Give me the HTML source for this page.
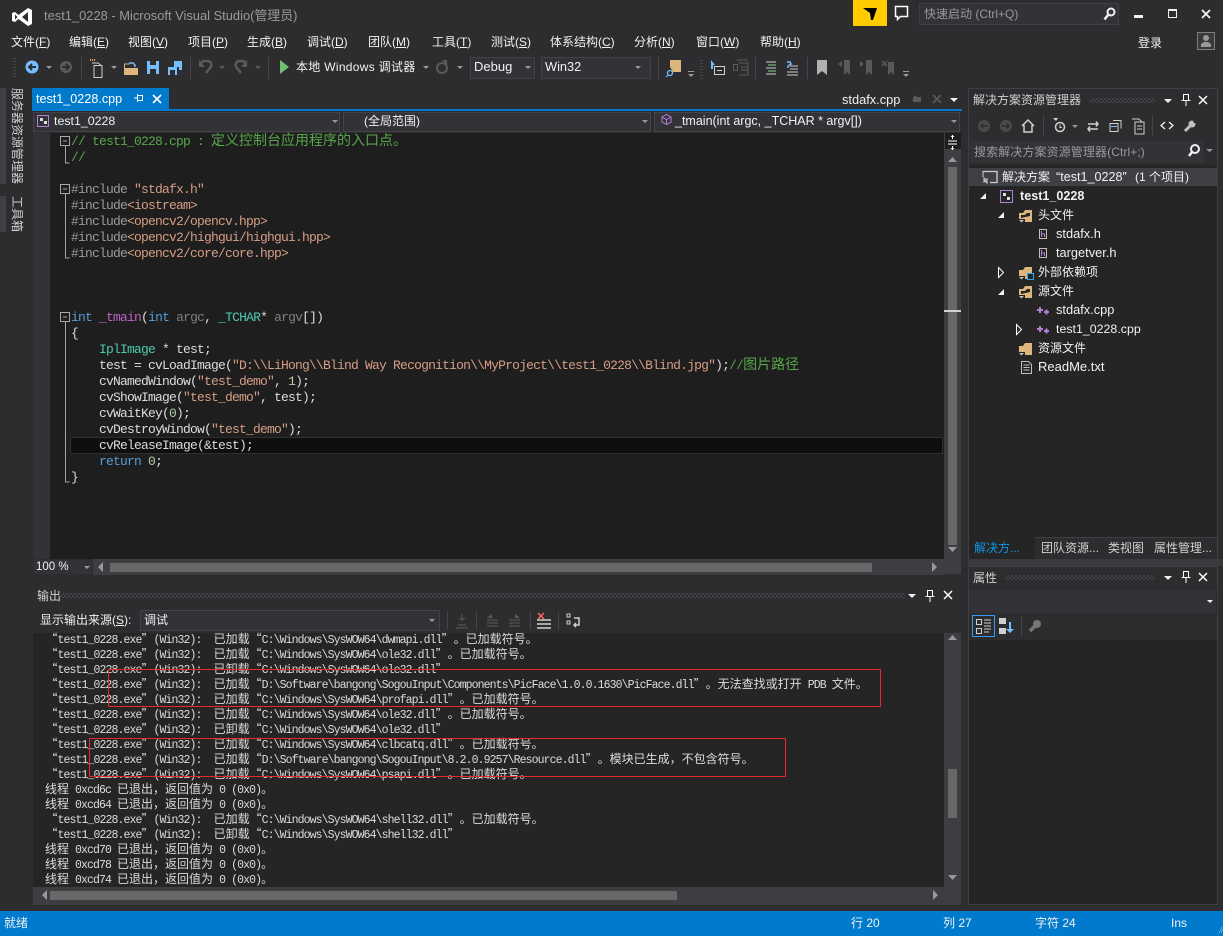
<!DOCTYPE html>
<html lang="zh-CN"><head><meta charset="utf-8"><title>test1_0228 - Microsoft Visual Studio(管理员)</title>
<style>
html,body{margin:0;padding:0;background:#2d2d30;}
#r{position:relative;width:1223px;height:936px;overflow:hidden;background:#2d2d30;font:12px/16px "Liberation Sans","Noto Sans CJK SC",sans-serif;color:#f1f1f1;}
.b{position:absolute;}
.t{position:absolute;white-space:pre;line-height:16px;}
.l{font-size:12.6px;}
u{text-decoration:underline;}
#code{position:absolute;left:71px;top:134px;margin:0;font:13px/16px "Liberation Mono",monospace;letter-spacing:-.8px;color:#dcdcdc;white-space:pre;}
#code i{font:14px/1px "WenQuanYi Zen Hei","Noto Sans CJK SC",sans-serif;letter-spacing:0;}
.cm{color:#57a64a}.pp{color:#9b9b9b}.st{color:#d69d85}.kw{color:#569cd6}.ty{color:#4ec9b0}.fn{color:#bd63c5}.pa{color:#7f7f7f}.nu{color:#b5cea8}
#out{position:absolute;left:39.5px;top:631px;margin:0;font:11.5px/15px "Liberation Mono",monospace;letter-spacing:-.9px;color:#dcdcdc;white-space:pre;}
#out i{font:12px/15px "WenQuanYi Zen Hei","Noto Sans CJK SC",sans-serif;letter-spacing:0;display:inline-block;}
#out div{height:15px;}
#out .h{margin-left:-.5px;}
.q{width:12px;}
.grip{position:absolute;height:5px;background-image:repeating-conic-gradient(#414145 0 25%,transparent 0 50%);background-size:4px 4px;}
.combo{position:absolute;background:#333337;border:1px solid #434346;box-sizing:border-box;}
svg{position:absolute;left:0;top:0;}
</style></head><body><div id="r">

<!-- left rail -->
<div class="b" style="left:0;top:88px;width:6px;height:96px;background:#3f3f46"></div>
<div class="b" style="left:0;top:196px;width:6px;height:36px;background:#3f3f46"></div>
<div class="t" style="left:9px;top:88px;writing-mode:vertical-rl;text-orientation:sideways;line-height:16px;color:#d0d0d0">服务器资源管理器</div>
<div class="t" style="left:9px;top:196px;writing-mode:vertical-rl;text-orientation:sideways;line-height:16px;color:#d0d0d0">工具箱</div>

<!-- title + menu -->
<div class="t" style="left:44px;top:8px;color:#999;font-size:12.9px">test1_0228 - Microsoft Visual Studio(管理员)</div>
<div class="b" style="left:853px;top:0;width:34px;height:26px;background:#ffcc00"></div>
<div class="b" style="left:919px;top:3px;width:200px;height:22px;background:#333337;border:1px solid #3f3f46;box-sizing:border-box"></div>
<div class="t" style="left:924px;top:6px;color:#999">快速启动 (Ctrl+Q)</div>
<div class="t" style="left:11px;top:34px"><span>文件(<u>F</u>)</span></div>
<div class="t" style="left:69px;top:34px">编辑(<u>E</u>)</div>
<div class="t" style="left:128px;top:34px">视图(<u>V</u>)</div>
<div class="t" style="left:188px;top:34px">项目(<u>P</u>)</div>
<div class="t" style="left:247px;top:34px">生成(<u>B</u>)</div>
<div class="t" style="left:307px;top:34px">调试(<u>D</u>)</div>
<div class="t" style="left:368px;top:34px">团队(<u>M</u>)</div>
<div class="t" style="left:432px;top:34px">工具(<u>T</u>)</div>
<div class="t" style="left:491px;top:34px">测试(<u>S</u>)</div>
<div class="t" style="left:550px;top:34px">体系结构(<u>C</u>)</div>
<div class="t" style="left:634px;top:34px">分析(<u>N</u>)</div>
<div class="t" style="left:696px;top:34px">窗口(<u>W</u>)</div>
<div class="t" style="left:760px;top:34px">帮助(<u>H</u>)</div>
<div class="t" style="left:1138px;top:35px">登录</div>

<!-- toolbar -->
<div class="t" style="left:296px;top:59px;letter-spacing:.3px">本地 Windows 调试器</div>
<div class="combo" style="left:470px;top:57px;width:65px;height:22px"></div>
<div class="t l" style="left:474px;top:59px;font-size:13px">Debug</div>
<div class="combo" style="left:541px;top:57px;width:110px;height:22px"></div>
<div class="t l" style="left:545px;top:59px;font-size:12.8px">Win32</div>

<!-- editor frame -->
<div class="b" style="left:32px;top:88px;width:137px;height:21px;background:#007acc"></div>
<div class="t l" style="left:36px;top:91px;color:#fff">test1_0228.cpp</div>
<div class="b" style="left:32px;top:109px;width:930px;height:2px;background:#007acc"></div>
<div class="t l" style="left:842px;top:92px;font-size:12.8px">stdafx.cpp</div>
<div class="b" style="left:32px;top:111px;width:929px;height:22px;background:#2d2d30"></div>
<div class="combo" style="left:33px;top:112px;width:307px;height:20px"></div>
<div class="combo" style="left:343px;top:112px;width:308px;height:20px"></div>
<div class="combo" style="left:654px;top:112px;width:306px;height:20px"></div>
<div class="t l" style="left:54px;top:113px;font-size:12.4px">test1_0228</div>
<div class="t" style="left:364px;top:113px">(全局范围)</div>
<div class="t l" style="left:675px;top:113px;font-size:12.5px">_tmain(int argc, _TCHAR * argv[])</div>

<div class="b" style="left:33px;top:133px;width:17px;height:426px;background:#333337"></div>
<div class="b" style="left:50px;top:133px;width:894px;height:426px;background:#1e1e1e"></div>
<div class="b" style="left:70px;top:437px;width:873px;height:17px;background:#0f0f0f;border:1px solid #2f2f2f;box-sizing:border-box"></div>
<pre id="code"><span class="cm">// test1_0228.cpp : <i>定义控制台应用程序的入口点。</i></span>
<span class="cm">//</span>

<span class="pp">#include</span> <span class="st">"stdafx.h"</span>
<span class="pp">#include</span><span class="st">&lt;iostream&gt;</span>
<span class="pp">#include</span><span class="st">&lt;opencv2/opencv.hpp&gt;</span>
<span class="pp">#include</span><span class="st">&lt;opencv2/highgui/highgui.hpp&gt;</span>
<span class="pp">#include</span><span class="st">&lt;opencv2/core/core.hpp&gt;</span>



<span class="kw">int</span> <span class="fn">_tmain</span>(<span class="kw">int</span> <span class="pa">argc</span>, <span class="ty">_TCHAR</span>* <span class="pa">argv</span>[])
{
    <span class="ty">IplImage</span> * test;
    test = cvLoadImage(<span class="st">"D:\\LiHong\\Blind Way Recognition\\MyProject\\test1_0228\\Blind.jpg"</span>);<span class="cm">//<i>图片路径</i></span>
    cvNamedWindow(<span class="st">"test_demo"</span>, <span class="nu">1</span>);
    cvShowImage(<span class="st">"test_demo"</span>, test);
    cvWaitKey(<span class="nu">0</span>);
    cvDestroyWindow(<span class="st">"test_demo"</span>);
    cvReleaseImage(&amp;test);
    <span class="kw">return</span> <span class="nu">0</span>;
}</pre>

<!-- editor scrollbars -->
<div class="b" style="left:944px;top:133px;width:17px;height:441px;background:#3e3e42"></div>
<div class="b" style="left:945px;top:133px;width:16px;height:16px;background:#1e1e1e"></div>
<div class="b" style="left:948px;top:167px;width:9px;height:378px;background:#686868"></div>
<div class="b" style="left:944px;top:310px;width:17px;height:2px;background:#d0d0d0"></div>
<div class="b" style="left:33px;top:559px;width:911px;height:16px;background:#3e3e42"></div>
<div class="b" style="left:33px;top:559px;width:60px;height:16px;background:#333337;border:1px solid #2d2d30;box-sizing:border-box"></div>
<div class="t" style="left:36px;top:559px;font-size:11.5px">100 %</div>
<div class="b" style="left:110px;top:563px;width:762px;height:9px;background:#686868"></div>

<!-- output panel -->
<div class="t" style="left:37px;top:588px;color:#d0d0d0">输出</div>
<div class="grip" style="left:60px;top:593px;width:845px"></div>
<div class="t" style="left:40px;top:612px">显示输出来源(<u>S</u>):</div>
<div class="combo" style="left:140px;top:610px;width:300px;height:21px"></div>
<div class="t" style="left:144px;top:612px">调试</div>
<div class="b" style="left:33px;top:633px;width:911px;height:254px;background:#252526"></div>
<pre id="out"><div> <i class="q">“</i>test1_0228.exe<i class="q">”</i>(Win32):  <i>已加载</i><i class="q">“</i>C:\Windows\SysWOW64\dwmapi.dll<i class="q">”</i><i>。已加载符号。</i></div><div> <i class="q">“</i>test1_0228.exe<i class="q">”</i>(Win32):  <i>已加载</i><i class="q">“</i>C:\Windows\SysWOW64\ole32.dll<i class="q">”</i><i>。已加载符号。</i></div><div> <i class="q">“</i>test1_0228.exe<i class="q">”</i>(Win32):  <i>已卸载</i><i class="q">“</i>C:\Windows\SysWOW64\ole32.dll<i class="q">”</i></div><div> <i class="q">“</i>test1_0228.exe<i class="q">”</i>(Win32):  <i>已加载</i><i class="q">“</i>D:\Software\bangong\SogouInput\Components\PicFace\1.0.0.1630\PicFace.dll<i class="q">”</i><i>。无法查找或打开</i> PDB <i>文件。</i></div><div> <i class="q">“</i>test1_0228.exe<i class="q">”</i>(Win32):  <i>已加载</i><i class="q">“</i>C:\Windows\SysWOW64\profapi.dll<i class="q">”</i><i>。已加载符号。</i></div><div> <i class="q">“</i>test1_0228.exe<i class="q">”</i>(Win32):  <i>已加载</i><i class="q">“</i>C:\Windows\SysWOW64\ole32.dll<i class="q">”</i><i>。已加载符号。</i></div><div> <i class="q">“</i>test1_0228.exe<i class="q">”</i>(Win32):  <i>已卸载</i><i class="q">“</i>C:\Windows\SysWOW64\ole32.dll<i class="q">”</i></div><div> <i class="q">“</i>test1_0228.exe<i class="q">”</i>(Win32):  <i>已加载</i><i class="q">“</i>C:\Windows\SysWOW64\clbcatq.dll<i class="q">”</i><i>。已加载符号。</i></div><div> <i class="q">“</i>test1_0228.exe<i class="q">”</i>(Win32):  <i>已加载</i><i class="q">“</i>D:\Software\bangong\SogouInput\8.2.0.9257\Resource.dll<i class="q">”</i><i>。模块已生成，不包含符号。</i></div><div> <i class="q">“</i>test1_0228.exe<i class="q">”</i>(Win32):  <i>已加载</i><i class="q">“</i>C:\Windows\SysWOW64\psapi.dll<i class="q">”</i><i>。已加载符号。</i></div><div class="h"> <i>线程</i> 0xcd6c <i>已退出，返回值为</i> 0 (0x0)<i>。</i></div><div class="h"> <i>线程</i> 0xcd64 <i>已退出，返回值为</i> 0 (0x0)<i>。</i></div><div> <i class="q">“</i>test1_0228.exe<i class="q">”</i>(Win32):  <i>已加载</i><i class="q">“</i>C:\Windows\SysWOW64\shell32.dll<i class="q">”</i><i>。已加载符号。</i></div><div> <i class="q">“</i>test1_0228.exe<i class="q">”</i>(Win32):  <i>已卸载</i><i class="q">“</i>C:\Windows\SysWOW64\shell32.dll<i class="q">”</i></div><div class="h"> <i>线程</i> 0xcd70 <i>已退出，返回值为</i> 0 (0x0)<i>。</i></div><div class="h"> <i>线程</i> 0xcd78 <i>已退出，返回值为</i> 0 (0x0)<i>。</i></div><div class="h"> <i>线程</i> 0xcd74 <i>已退出，返回值为</i> 0 (0x0)<i>。</i></div></pre>
<div class="b" style="left:944px;top:633px;width:17px;height:272px;background:#3e3e42"></div>
<div class="b" style="left:948px;top:769px;width:9px;height:49px;background:#686868"></div>
<div class="b" style="left:33px;top:887px;width:911px;height:18px;background:#3e3e42"></div>
<div class="b" style="left:50px;top:891px;width:627px;height:9px;background:#686868"></div>
<div class="b" style="left:108px;top:669px;width:773px;height:38px;border:1px solid #e8282c;box-sizing:border-box"></div>
<div class="b" style="left:89px;top:738px;width:697px;height:39px;border:1px solid #e8282c;box-sizing:border-box"></div>

<!-- solution explorer -->
<div class="b" style="left:968px;top:88px;width:250px;height:472px;border:1px solid #3f3f46;border-bottom:0;box-sizing:border-box"></div>
<div class="t" style="left:973px;top:92px;color:#d0d0d0">解决方案资源管理器</div>
<div class="grip" style="left:1090px;top:98px;width:65px"></div>
<div class="b" style="left:970px;top:141px;width:234px;height:22px;background:#333337"></div>
<div class="t" style="left:974px;top:144px;color:#999;letter-spacing:.1px">搜索解决方案资源管理器(Ctrl+;)</div>
<div class="b" style="left:969px;top:165px;width:248px;height:372px;background:#252526"></div>
<div class="b" style="left:969px;top:168px;width:248px;height:18px;background:#3f3f46"></div>
<div class="t" style="left:1002px;top:169px">解决方案</div>
<div class="t l" style="left:1056px;top:169px">“test1_0228”</div>
<div class="t" style="left:1135px;top:169px">(1 个项目)</div>
<div class="t l" style="left:1020px;top:188px;font-weight:bold">test1_0228</div>
<div class="t" style="left:1038px;top:207px">头文件</div>
<div class="t l" style="left:1056px;top:226px;font-size:12.8px">stdafx.h</div>
<div class="t l" style="left:1056px;top:245px;font-size:12.8px">targetver.h</div>
<div class="t" style="left:1038px;top:264px">外部依赖项</div>
<div class="t" style="left:1038px;top:283px">源文件</div>
<div class="t l" style="left:1056px;top:302px;font-size:12.8px">stdafx.cpp</div>
<div class="t l" style="left:1056px;top:321px;font-size:12.4px">test1_0228.cpp</div>
<div class="t" style="left:1038px;top:340px">资源文件</div>
<div class="t l" style="left:1038px;top:359px;font-size:13px">ReadMe.txt</div>

<!-- bottom tabs -->
<div class="b" style="left:969px;top:537px;width:66px;height:22px;background:#252526"></div>
<div class="t" style="left:974px;top:540px;color:#0e97e8">解决方...</div>
<div class="b" style="left:1035px;top:537px;width:183px;height:1px;background:#3f3f46"></div>
<div class="t" style="left:1041px;top:540px;color:#d0d0d0">团队资源...</div>
<div class="t" style="left:1108px;top:540px;color:#d0d0d0">类视图</div>
<div class="t" style="left:1154px;top:540px;color:#d0d0d0">属性管理...</div>
<div class="b" style="left:968px;top:559px;width:255px;height:7px;background:#3a3a3e"></div>

<!-- properties -->
<div class="b" style="left:968px;top:566px;width:250px;height:339px;border:1px solid #3f3f46;box-sizing:border-box;background:#252526"></div>
<div class="b" style="left:969px;top:567px;width:248px;height:23px;background:#2d2d30"></div>
<div class="t" style="left:973px;top:570px;color:#d0d0d0">属性</div>
<div class="grip" style="left:1005px;top:575px;width:150px"></div>
<div class="b" style="left:969px;top:590px;width:247px;height:23px;background:#333337"></div>
<div class="b" style="left:969px;top:613px;width:248px;height:27px;background:#2d2d30"></div>
<div class="b" style="left:972px;top:615px;width:23px;height:22px;border:1px solid #3399ff;box-sizing:border-box"></div>

<!-- status bar -->
<div class="b" style="left:0;top:911px;width:1223px;height:25px;background:#007acc"></div>
<div class="t" style="left:4px;top:915px">就绪</div>
<div class="t" style="left:851px;top:915px">行 20</div>
<div class="t" style="left:943px;top:915px">列 27</div>
<div class="t" style="left:1035px;top:915px">字符 24</div>
<div class="t" style="left:1171px;top:915px">Ins</div>

<!-- icons -->
<svg width="1223" height="936" viewBox="0 0 1223 936" fill="none">
<path fill="#fff" fill-rule="evenodd" d="M12 13l3-1 3.500 3L28 8l4 2v14l-4 2-9.500-7-3.500 3-3-1zM15 14.500v5l2.500-2.500zM28 12l-6 5 6 5z"/>
<path fill="#000" d="M863 8h14l-4 12h-2l-1-7z"/>
<path stroke="#fff" stroke-width="1.500" d="M895.500 6.500h12v10h-7l-3 3v-3h-2z"/>
<circle cx="1111" cy="12" r="3.500" stroke="#f1f1f1" stroke-width="2"/><path stroke="#f1f1f1" stroke-width="2.500" d="M1108 15l-3.500 4.500"/>
<path fill="#f1f1f1" d="M1134 15h9v3h-9z"/>
<path stroke="#f1f1f1" d="M1168.500 9.500h8v8h-8z"/><path stroke="#f1f1f1" stroke-width="2" d="M1168 10h9"/>
<path stroke="#f1f1f1" stroke-width="1.800" d="M1202 10l8 8M1210 10l-8 8"/>
<path fill="#3a3a3c" stroke="#808080" d="M1197.500 32.500h17v17h-17z"/><circle cx="1206" cy="38" r="3" fill="#999"/><path fill="#999" d="M1201 47v-3l3-2h4l3 2v3z"/>

<!-- toolbar icons -->
<path stroke="#46464a" stroke-dasharray="1 2" stroke-width="3" d="M14.500 58v20"/>
<circle cx="32" cy="67" r="6.500" fill="#75beff"/><path stroke="#2d2d30" stroke-width="2" d="M36 67h-7m3-3l-3 3 3 3"/>
<path fill="#999" d="M46 66h6l-3 3z"/>
<circle cx="66" cy="67" r="6" fill="#5a5a5a"/><path stroke="#2d2d30" stroke-width="2" d="M62 67h7m-3-3l3 3-3 3"/>
<path stroke="#46464a" d="M81.500 57v22M190.500 57v22M268.500 57v22M658.500 57v22M755.500 57v22M807.500 57v22"/>
<path stroke="#d0d0d0" d="M94 65.500h8v12h-8zM92 63h6l4 3"/><path stroke="#d8a960" stroke-dasharray="1 1" stroke-width="2" d="M90 60h6"/>
<path fill="#999" d="M111 66h6l-3 3z"/>
<path fill="#dcb67a" d="M124 68h14v7h-14z"/><path stroke="#dcb67a" d="M124.500 68v-4h5"/><path stroke="#75beff" stroke-width="1.500" d="M129 63h4l2 2v2"/>
<path fill="#75beff" fill-rule="evenodd" d="M147 61h12v13h-12zM150 61v4h6v-4zM150 69v5h6v-5z"/>
<path fill="#75beff" fill-rule="evenodd" d="M174 61h8v9h-3v-3h-5zM168 67h9v8h-9zM170 70h5v5h-5z"/>
<path stroke="#5a5a5a" stroke-width="2.500" d="M200 64l3-3h4a4 4 0 0 1 3 7l-4 5"/><path fill="#5a5a5a" d="M199 60v7h6z"/>
<path fill="#5a5a5a" d="M219 66h6l-3 3zM255 66h6l-3 3z"/>
<path stroke="#5a5a5a" stroke-width="2.500" d="M246 64l-3-3h-3a4 4 0 0 0-3 7l4 5"/><path fill="#5a5a5a" d="M247 60v7h-6z"/>
<path fill="#6fbf73" d="M280 60l9 7-9 7z"/>
<path fill="#999" d="M423 66h6l-3 3zM457 66h6l-3 3zM525 66h6l-3 3zM635 66h6l-3 3zM1206 149h7l-3.500 3z"/>
<circle cx="442" cy="68" r="5" stroke="#5a5a5a" stroke-width="2"/><path fill="#5a5a5a" d="M442 60h5v5z"/>
<path fill="#dcb67a" d="M670 60h11v12h-8l-3-5z"/><circle cx="670" cy="73" r="2.500" stroke="#75beff" stroke-width="1.300"/><path stroke="#75beff" d="M668 75l-2 2"/>
<path fill="#999" d="M688 71h6v1h-6zM688 74h6l-3 3z"/>
<path stroke="#46464a" stroke-dasharray="1 2" stroke-width="3" d="M701.500 60v20"/>
<path stroke="#d0d0d0" d="M714.500 66.500h10v8h-10z"/><path stroke="#d0d0d0" d="M717 70.500h5"/><path fill="#75beff" d="M711 60l4 5h-2v4h-2z"/>
<path stroke="#5a5a5a" d="M737.500 64.500h-4v6h4zM737 60h11M739 63h9v12h-9M741 67h7M741 70h7"/>
<path stroke="#d0d0d0" d="M766 62h10M768 65h8M766 68h10M768 71h8M766 74h10"/><path stroke="#89d185" d="M768 65h8M768 71h8"/>
<path stroke="#d0d0d0" d="M790 66h8M790 69h8M787 72h11M787 75h11"/><path stroke="#75beff" stroke-width="1.500" d="M787 62h3l1 2-3 2v2"/>
<path fill="#b0b0b0" d="M817 60h10v15l-5-4-5 4z"/>
<path fill="#5a5a5a" d="M844 60h6v15l-3-3-3 3zM838 64l4-3v6z"/>
<path fill="#5a5a5a" d="M866 60h6v15l-3-3-3 3zM864 64l-4-3v6z"/>
<path fill="#5a5a5a" d="M888 62h6v13l-3-3-3 3z"/><path stroke="#5a5a5a" stroke-width="1.500" d="M882 61l5 5M887 61l-5 5"/>
<path fill="#999" d="M903 71h6v1h-6zM903 74h6l-3 3z"/>

<!-- tab icons -->
<path stroke="#fff" d="M137.500 95.500h5v5h-5zM137.500 94v8M134 98h3.500"/>
<path stroke="#fff" stroke-width="1.600" d="M153 95l8 8M161 95l-8 8"/>
<path fill="#5a5a5a" d="M913 97h8v5h-8zM914 95l3 2h-3z"/>
<path stroke="#5a5a5a" stroke-width="1.600" d="M933 95l8 8M941 95l-8 8"/>
<path fill="#f1f1f1" d="M950 98h8l-4 4z"/>

<!-- nav bar -->
<path stroke="#b180d7" d="M37.500 115.500h11v11h-11z"/><path fill="#ddd" d="M40 118h3v3h-3zM44 121h3v3h-3z"/>
<path fill="#999" d="M332 120h6l-3 3zM642 120h6l-3 3zM951 120h6l-3 3z"/>
<path stroke="#b180d7" d="M662 117l4.500-2.500 4.500 2.500v5l-4.500 2.500-4.500-2.500zM662 117l4.500 2.500 4.500-2.500M666.500 119.500v5"/>

<!-- splitter + scroll arrows -->
<path stroke="#fff" d="M948 141h9M948 144h9"/><path stroke="#fff" d="M952.500 135v4m0 7v4"/><path fill="#fff" d="M950.500 137l2-2 2 2zM950.500 148l2 2 2-2z"/>
<path fill="#999" d="M948 162h9l-4.500-5zM948 547h9l-4.500 5zM103 562v10l-5-5zM932 562v10l5-5zM948 640h9l-4.500-5zM948 875h9l-4.500 5zM47 890v10l-5-5zM933 890v10l5-5z"/>
<path fill="#999" d="M84 566h6l-3 3zM429 619h6l-3 3z"/>

<!-- outlining -->
<g stroke="#a5a5a5"><path d="M60.500 136.500h9v9h-9zM63 141h4M60.500 184.500h9v9h-9zM63 189h4M60.500 312.500h9v9h-9zM63 317h4"/><path d="M65.500 146v17h4M65.500 194v64h4M65.500 322v160h4"/></g>

<!-- output panel icons -->
<path fill="#f1f1f1" d="M908 594h8l-4 4zM1164 99h8l-4 4zM1164 576h8l-4 4zM1207 600h6l-3 3z"/>
<path stroke="#fff" d="M927.500 590.500h5v6h-5zM925.500 596.500h9M930 597v5"/>
<path stroke="#fff" stroke-width="1.500" d="M944 591l8 8M952 591l-8 8"/>
<path stroke="#46464a" d="M447.500 612v18M476.500 612v18M530.500 612v18M558.500 612v18"/>
<path stroke="#5a5a5a" d="M456 628h12M458 625h8M462 614v6l-3-2m3 2l3-2"/>
<path stroke="#5a5a5a" d="M487 620h11M487 623h11M487 626h11"/><path fill="#5a5a5a" d="M487 618l5-4v4z"/>
<path stroke="#5a5a5a" d="M509 620h11M509 623h11M509 626h11"/><path fill="#5a5a5a" d="M520 618l-5-4v4z"/>
<path stroke="#d0d0d0" stroke-width="1.500" d="M537 620h14M537 624h14M537 628h14"/><path stroke="#f1705a" stroke-width="1.500" d="M538 613l6 6M544 613l-6 6"/>
<path stroke="#d0d0d0" d="M567 614h3v3h-3zM567 621h3v3h-3z"/><path stroke="#d0d0d0" stroke-width="1.500" d="M574 618h5v7h-5m2-2l-2 2 2 2"/>

<!-- solution explorer icons -->
<path stroke="#fff" d="M1183.500 94.500h5v6h-5zM1181.500 100.500h9M1186 101v5"/>
<path stroke="#fff" stroke-width="1.500" d="M1199 96l8 8M1207 96l-8 8"/>
<circle cx="984" cy="126" r="6" fill="#4a4a4a"/><circle cx="1006" cy="126" r="6" fill="#4a4a4a"/><path stroke="#2d2d30" stroke-width="1.500" d="M988 126h-7m2.500-2.500l-2.500 2.500 2.500 2.500M1002 126h7m-2.500-2.500l2.500 2.500-2.500 2.500"/>
<path stroke="#d0d0d0" stroke-width="1.500" d="M1022 126l6-6 6 6M1024 125v7h8v-7"/>
<path stroke="#46464a" d="M1043.500 116v20M1152.500 116v20"/>
<circle cx="1060" cy="127" r="4.500" stroke="#d0d0d0" stroke-width="1.500"/><path stroke="#d0d0d0" d="M1060 124.500v3h2"/><path fill="#d0d0d0" d="M1053 118h5l-2 3z"/>
<path fill="#999" d="M1072 125h6l-3 3z"/>
<path stroke="#d0d0d0" stroke-width="1.500" d="M1088 124h10m-2-2.500l2 2.500-2 2.500M1098 129h-10m2-2.500l-2 2.500 2 2.500"/>
<path stroke="#d0d0d0" d="M1110 123.500h8v8h-8zM1113 120.500h8v8"/><path fill="#75beff" d="M1111 126h6v1h-6z"/>
<path stroke="#d0d0d0" d="M1135 122h9v12h-9zM1132 119h7l3 3"/><path stroke="#d0d0d0" d="M1137 126h5M1137 129h5"/>
<path stroke="#f1f1f1" stroke-width="1.300" d="M1165 122l-4 3.500 4 3.500M1169 122l4 3.500-4 3.500"/>
<path stroke="#c0c0c0" stroke-width="3" d="M1185 131l6-6"/><circle cx="1192" cy="124" r="3.500" fill="#c0c0c0"/><path fill="#2d2d30" d="M1192 119h5v4h-3z"/>
<circle cx="1195" cy="149" r="4" stroke="#f1f1f1" stroke-width="2"/><path stroke="#f1f1f1" stroke-width="2.500" d="M1192 152l-3 4"/>

<!-- tree icons -->
<path stroke="#d0d0d0" stroke-width="1.300" d="M983 171.500h14v11h-7"/><path stroke="#d0d0d0" d="M983 171v6"/><path stroke="#d0d0d0" d="M984 178l2 2-2 2zM987 178v5l-2-2"/>
<path fill="#f1f1f1" d="M986 193v6h-6zM1004 212v6h-6zM1004 289v6h-6z"/>
<path stroke="#fff" d="M998.500 267.500l5 5-5 5zM1016.500 324.500l5 5-5 5z"/>
<path stroke="#b180d7" d="M1000.500 190.500h12v12h-12z"/><path fill="#ddd" d="M1003 193h3v3h-3zM1007 197h3v3h-3z"/>
<g fill="#dcb67a" fill-rule="evenodd">
<path d="M1019 213h4l2-3h7v12h-13zM1021 215h4l2-2h3v3l-9 2z"/>
<path d="M1019 270h4l2-3h7v12h-13z"/>
<path d="M1019 289h4l2-3h7v12h-13zM1021 291h4l2-2h3v3l-9 2z"/>
<path d="M1019 346h4l2-3h7v12h-13z"/>
</g>
<path stroke="#2aa7f0" fill="#252526" d="M1027.500 273.500h6v6h-6z"/>
<path fill="#252526" d="M1018 219h7v4h-7zM1018 276h7v4h-7zM1018 295h7v4h-7zM1018 352h7v4h-7z"/>
<path fill="#c0c0c0" d="M1019 220h5l-2.500 2.500zM1019 277h5l-2.500 2.500zM1019 296h5l-2.500 2.500zM1019 353h5l-2.500 2.500z"/>
<path stroke="#c0c0c0" d="M1039.500 229.500h7v9h-7zM1039.500 248.500h7v9h-7z"/><path stroke="#b180d7" d="M1041.500 231v6m0-3h3v3M1041.500 250v6m0-3h3v3"/>
<path stroke="#b180d7" stroke-width="2" d="M1037 310h6m-3-3v6M1044 312h5m-2.500-2.500v5M1037 329h6m-3-3v6M1044 331h5m-2.500-2.500v5"/>
<path stroke="#c0c0c0" d="M1021.500 361.500h7l3 3v9h-10zM1023.500 365h6M1023.500 367.500h6M1023.500 370h6"/>

<!-- properties icons -->
<path stroke="#fff" d="M1183.500 571.500h5v6h-5zM1181.500 577.500h9M1186 578v5"/>
<path stroke="#fff" stroke-width="1.500" d="M1199 573l8 8M1207 573l-8 8"/>
<path stroke="#d0d0d0" d="M976.500 619.500h5v5h-5zM976.500 628.500h5v5h-5zM984 620h7M984 623h7M984 626h7M984 629h7M984 632h5"/>
<path fill="#d0d0d0" d="M999 618h7v6h-7zM999 628h7v6h-7z"/><path stroke="#75beff" stroke-width="2" d="M1010 622v9"/><path fill="#75beff" d="M1006 629h8l-4 4z"/>
<path stroke="#46464a" d="M1021.500 617v20"/>
<path stroke="#777" stroke-width="3.500" d="M1030 631l5-5"/><circle cx="1037" cy="624" r="4" fill="#777"/>

<!-- resize grip -->
<path stroke="#bfe0f5" stroke-dasharray="1 1" d="M1219 932h4M1220 930h3M1221 928h2"/>
</svg>
</div></body></html>
